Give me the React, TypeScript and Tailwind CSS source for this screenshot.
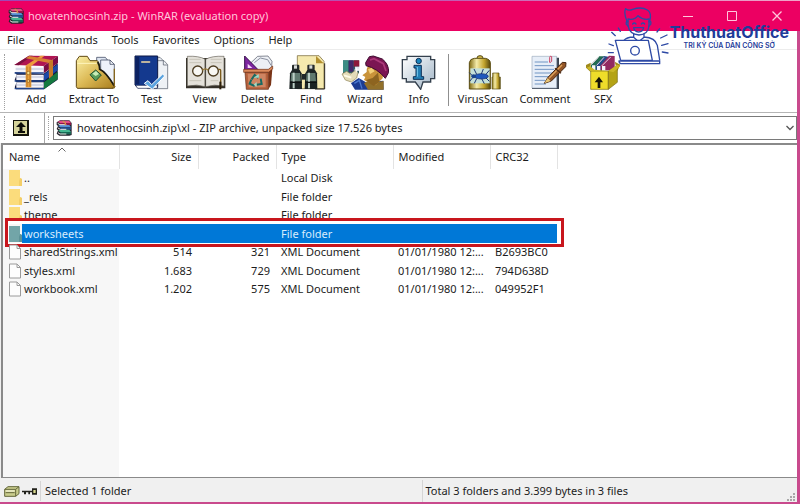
import type { ReactNode } from 'react'

const menus = ['File', 'Commands', 'Tools', 'Favorites', 'Options', 'Help']

function Icon({ box, children }: { box: string; children: ReactNode }) {
  return (
    <svg viewBox={box} className="h-9 w-12" aria-hidden="true">
      {children}
    </svg>
  )
}

const addIcon = (
  <Icon box="36 162 144 108">
    <path d="M130 222 173 190V239L132 268H48L44 262 50 247 44 240 50 224 44 216z" fill="#171a3d" />
    <path d="M43 195 87 167 174 168 131 198z" fill="#b01552" />
    <path d="M43 195 87 167 98 167 56 196z" fill="#7c0f3f" />
    <path d="M131 198 174 168V189L131 220z" fill="#7a0d45" />
    <path d="M132 223 173 193V211L132 243z" fill="#1c49a8" />
    <path d="M132 247 173 215V237L132 268z" fill="#14793f" />
    <path d="M47 200H130V217H47zM49 224H131V240H49zM49 247H131V263H49z" fill="#f4f4fa" />
    <path d="M47 207H130M49 231H131M49 255H131" stroke="#b6bcd6" strokeWidth="3" />
    <path d="M44 219H131M44 243H131M44 266H132" stroke="#20458e" strokeWidth="4" />
    <path d="M76 197 122 167 134 167 94 198z" fill="#ee9b3d" />
    <path d="M77 175 88 168 159 181 147 189z" fill="#d98234" />
    <path d="M77 197H94V262H77z" fill="#e9a33c" />
    <path d="M81 200V260M90 200V260" stroke="#a75b17" strokeWidth="2" />
    <path d="M146 187 159 178V226L147 236z" fill="#c67a28" />
    <circle cx="85" cy="219" r="5" fill="#fbe38c" stroke="#8d5417" strokeWidth="2" />
    <circle cx="85" cy="243" r="4" fill="#fbe38c" stroke="#8d5417" strokeWidth="2" />
  </Icon>
)

const extractIcon = (
  <Icon box="210 162 144 108">
    <defs>
      <linearGradient id="folder" x1="0" y1="0" x2="1" y2="1">
        <stop offset="0" stopColor="#fbf0a6" />
        <stop offset="0.5" stopColor="#dcb955" />
        <stop offset="1" stopColor="#a97d1c" />
      </linearGradient>
    </defs>
    <path d="M290 172H316L324 182V240H290z" fill="#dfe6f2" stroke="#27324b" strokeWidth="2" />
    <path d="M302 180H330L343 193V250H302z" fill="#eef2fa" stroke="#27324b" strokeWidth="2" />
    <path d="M330 180V193H343" fill="none" stroke="#27324b" strokeWidth="2" />
    <path d="M229 182 238 169H262L270 182H292C300 190 299 202 299 208 318 216 330 240 345 260L340 265H232L229 260z" fill="url(#folder)" stroke="#5f4712" strokeWidth="3" />
    <path d="M232 190H290" stroke="#fff6be" strokeWidth="3" />
    <path d="M293 186Q299 196 299 208 318 216 343 258" fill="none" stroke="#1c1a12" strokeWidth="5" />
    <path d="M343 206V263H336" fill="none" stroke="#87671f" strokeWidth="4" />
    <path d="M270 224 287 210 304 225 287 243z" fill="#5a9d5c" stroke="#244f31" strokeWidth="3" />
    <path d="M277 221 288 213 297 222 287 228z" fill="#c9ecb7" />
  </Icon>
)

const testIcon = (
  <Icon box="382 162 144 108">
    <path d="M456 172H478L488 182V255H456z" fill="#e6eaf0" stroke="#4c5361" strokeWidth="2" />
    <path d="M464 182H490L501 194V266H440V240z" fill="#eef1f5" stroke="#4c5361" strokeWidth="2" />
    <path d="M488 183V195H500" fill="none" stroke="#4c5361" strokeWidth="2" />
    <path d="M403 168H471V262H410L403 255z" fill="#14398e" stroke="#0b1744" strokeWidth="3" />
    <path d="M405 171H416V253H405z" fill="#0c2161" />
    <path d="M404 256H470V265H411z" fill="#fff" stroke="#0b1744" strokeWidth="2" />
    <rect x="421" y="184" width="28" height="4" rx="2" fill="#f3dca2" />
    <path d="M431 250 442 242 453 254 486 222 492 228 455 268z" fill="#5ba3df" stroke="#fff" strokeWidth="3" />
  </Icon>
)

const viewIcon = (
  <Icon box="541 162 144 108">
    <path d="M556 174H674V265H556z" fill="#343029" />
    <path d="M560 169Q595 167 614 178V260Q590 252 560 258zM670 169Q633 167 615 178V260Q640 252 670 258z" fill="#e4e1da" stroke="#656158" strokeWidth="2" />
    <path d="M566 178H600M566 188H602M630 178H663M630 188H663M566 242H602M630 242H653" stroke="#c8c4ba" strokeWidth="3" />
    <path d="M614 176V264" stroke="#4e4a42" strokeWidth="4" />
    <circle cx="591" cy="213" r="15" fill="#f8f7f3" stroke="#4b3b20" strokeWidth="4" />
    <circle cx="638" cy="213" r="15" fill="#f8f7f3" stroke="#4b3b20" strokeWidth="4" />
    <path d="M605 211Q614 202 623 211" fill="none" stroke="#9b7b35" strokeWidth="4" />
    <path d="M653 209Q661 206 660 214V262" fill="none" stroke="#7b5b1c" strokeWidth="4" />
    <path d="M659 245V268" stroke="#2c200c" strokeWidth="6" />
  </Icon>
)

const deleteIcon = (
  <Icon box="-19 162 144 108">
    <path d="M32 188 52 169 83 168 95 184 93 212H32z" fill="#edf0f5" stroke="#4d5260" strokeWidth="2" />
    <path d="M42 188 60 174 82 179 92 196" fill="none" stroke="#8b90a0" strokeWidth="3" />
    <path d="M13 168V212H56z" fill="#7d25a0" stroke="#38104c" strokeWidth="3" />
    <path d="M22 191V204H36z" fill="#f6d6f8" />
    <path d="M10 208H84L97 198V207L85 217H10z" fill="#dc8a5b" stroke="#6b2e14" strokeWidth="2" />
    <path d="M14 217H84V268H18z" fill="#b5613c" stroke="#602a15" strokeWidth="2" />
    <path d="M84 217 96 207 92 255 84 268z" fill="#793417" />
    <path d="M22 221H76V262H25z" fill="#cf8562" />
    <path d="M34 238 43 225 54 234M61 236 64 252 49 254M43 258 28 251 33 239" fill="none" stroke="#176a63" strokeWidth="6" />
    <path d="M40 233H56L55 222zM49 246V261L40 254z" fill="#9ddac8" />
  </Icon>
)

const findIcon = (
  <Icon box="141 162 144 108">
    <path d="M172 167H237L252 184V266H172z" fill="#f5e9ae" stroke="#6b5b28" strokeWidth="2" />
    <path d="M228 168 251 190H228z" fill="#b28f2d" />
    <path d="M254 190V267H225" fill="none" stroke="#28231a" strokeWidth="3" />
    <rect x="186" y="222" width="20" height="17" fill="#20282a" />
    {[148, 194].map((x) => (
      <g key={x}>
        <rect x={x + 8} y="194" width="22" height="20" rx="3" fill="#262b2c" />
        <rect x={x + 14} y="196" width="9" height="10" fill="#d7dbd9" />
        <path d={`M${x + 2} 220 ${x + 8} 210H${x + 31}L${x + 37} 220 ${x + 38} 267H${x}z`} fill="#1c2424" />
        <path d={`M${x + 6} 219H${x + 32}L${x + 34} 244H${x + 4}z`} fill="#60796f" />
        <path d={`M${x + 13} 218V265`} stroke="#bccfc6" strokeWidth="6" />
        <path d={`M${x + 2} 247H${x + 37}`} stroke="#0d1212" strokeWidth="4" />
      </g>
    ))}
  </Icon>
)

const wizardIcon = (
  <Icon box="303 162 144 108">
    <path d="M309 181H357V220H309z" fill="#315d68" />
    <path d="M309 181H325V217H309z" fill="#3c8c84" />
    <path d="M326 181H340V215H326z" fill="#42286b" />
    <path d="M341 181H358V200H341z" fill="#8d183b" />
    <path d="M345 200H358V212H345z" fill="#dfe4f0" />
    <path d="M306 222 320 214 332 222 347 210 354 218 350 234 334 246 316 240z" fill="#e3dcb9" stroke="#8c8052" strokeWidth="2" />
    <path d="M312 226 334 233" stroke="#fffbe8" strokeWidth="6" />
    <path d="M350 203V217M343 210H357" stroke="#fff" strokeWidth="3" />
    <path d="M333 250 356 234 378 247 430 242 431 269H345z" fill="#1c3c91" />
    <path d="M343 250 358 241 366 266" fill="none" stroke="#4a78cf" strokeWidth="4" />
    <path d="M372 250Q390 234 413 246L431 243V269H384z" fill="#92702a" />
    <path d="M383 200Q378 208 380 216L367 226 376 231 372 240 388 248 407 256 428 235 431 207 403 190z" fill="#c9933a" />
    <path d="M384 208 396 203 404 214 390 222z" fill="#f3cf76" />
    <path d="M378 240 398 234 414 218 418 246 401 258 386 248z" fill="#8d6420" />
    <path d="M377 188 388 170 400 168 427 177Q447 193 446 217L436 235Q412 205 378 197z" fill="#7b1553" stroke="#3e0b30" strokeWidth="3" />
    <path d="M390 180 402 176 430 191 438 213" fill="none" stroke="#ac397a" strokeWidth="5" />
  </Icon>
)

const infoIcon = (
  <Icon box="465 162 144 108">
    <defs>
      <linearGradient id="bubble" x1="0" y1="0" x2="1" y2="1">
        <stop offset="0" stopColor="#ffffff" />
        <stop offset="1" stopColor="#9fb3c5" />
      </linearGradient>
    </defs>
    <path d="M501 169H572V179H584V236H572V246H549L542 268 526 246H499V236H487V179H501z" fill="url(#bubble)" stroke="#34404d" strokeWidth="4" />
    <circle cx="536" cy="183" r="8" fill="#1983bb" stroke="#0d2f57" strokeWidth="3" />
    <path d="M522 196H544V230H551V238H520V230H528V204H522z" fill="#227fb6" stroke="#0d2f57" strokeWidth="3" />
    <path d="M532 201V230" stroke="#79cbee" strokeWidth="3" />
  </Icon>
)

const virusIcon = (
  <Icon box="57 162 144 108">
    <defs>
      <linearGradient id="can">
        <stop offset="0" stopColor="#806b12" />
        <stop offset="0.35" stopColor="#f5ecaa" />
        <stop offset="0.7" stopColor="#c3a52d" />
        <stop offset="1" stopColor="#55460c" />
      </linearGradient>
    </defs>
    <path d="M111 174Q111 167 120 167T129 174" fill="#d9bf4a" stroke="#554915" strokeWidth="3" />
    <path d="M88 188Q90 176 103 175H136Q150 178 151 188V267H88z" fill="url(#can)" stroke="#5c4e13" strokeWidth="3" />
    <path d="M158 219H177V231H181V267H156V231H158z" fill="url(#can)" stroke="#5c4e13" strokeWidth="2" />
    <path d="M91 205H149V250H91z" fill="#c4e0d8" />
    <path d="M98 228 88 218M110 223 102 207M124 222 130 207M137 224 148 211M98 233 89 244M110 236 103 250M125 236 133 251M137 233 148 244" stroke="#183473" strokeWidth="3" />
    <ellipse cx="124" cy="229" rx="21" ry="8" fill="#1d58bd" stroke="#122b68" strokeWidth="2" />
    <ellipse cx="101" cy="229" rx="7" ry="6" fill="#17448d" />
  </Icon>
)

const commentIcon = (
  <Icon box="243 162 144 108">
    <path d="M282 173H357V267H276z" fill="#39414f" />
    <path d="M276 169H350V264H276z" fill="#e7eef8" stroke="#9caabd" strokeWidth="2" />
    <path d="M284 186H324M284 197H342M284 208H342M284 219H339M284 230H328M284 241H315M284 252H318" stroke="#7195c3" strokeWidth="3" />
    <path d="M329 188V172Q330 166 335 170V184Q331 190 328 184" fill="none" stroke="#cc4564" strokeWidth="3" />
    <path d="M313 250 323 233 367 187 378 188 377 200 334 243z" fill="#925526" stroke="#452714" strokeWidth="3" />
    <path d="M327 235 366 195" stroke="#dfa35b" strokeWidth="4" />
    <path d="M313 250 323 234 332 243z" fill="#e8c574" />
    <path d="M345 205 363 220" stroke="#4c2a13" strokeWidth="4" />
  </Icon>
)

const sfxIcon = (
  <Icon box="417 162 144 108">
    <path d="M438 195 452 188 452 216 438 203zM524 185 541 194 532 213z" fill="#a08a1c" />
    <path d="M453 193 478 169 492 169 479 213H453z" fill="#246d51" />
    <path d="M468 196 492 168 505 170 493 213H468z" fill="#244a89" />
    <path d="M482 196 507 167 524 168V211H482z" fill="#922a61" />
    <path d="M456 196H466V217H456zM471 198H481V218H471zM486 198H496V218H486z" fill="#f7f5fa" />
    <path d="M454 194 475 172M470 196 492 172M485 198 512 171" stroke="#e9d6e5" strokeWidth="3" />
    <path d="M452 213H505V268H452z" fill="#efdd2a" stroke="#776911" strokeWidth="2" />
    <path d="M505 213 532 197V247L505 268z" fill="#b4a315" stroke="#776911" strokeWidth="2" />
    <path d="M452 213 440 203 450 199 464 209 505 213 520 217 541 198 531 194 505 213z" fill="#cbb727" />
    <path d="M473 264V247H464L477 230 489 247H481V264z" fill="#171607" />
  </Icon>
)

const tools = [
  { label: 'Add', width: 'w-[54px]', icon: addIcon },
  { label: 'Extract To', width: 'w-[62px]', icon: extractIcon },
  { label: 'Test', width: 'w-[53px]', icon: testIcon },
  { label: 'View', width: 'w-[53px]', icon: viewIcon },
  { label: 'Delete', width: 'w-[53px]', icon: deleteIcon },
  { label: 'Find', width: 'w-[54px]', icon: findIcon },
  { label: 'Wizard', width: 'w-[54px]', icon: wizardIcon },
  { label: 'Info', width: 'w-[54px]', icon: infoIcon },
]

const extraTools = [
  { label: 'VirusScan', width: 'w-[62px]', icon: virusIcon },
  { label: 'Comment', width: 'w-[62px]', icon: commentIcon },
  { label: 'SFX', width: 'w-[54px]', icon: sfxIcon },
]

const files = [
  { name: '..', type: 'Local Disk' },
  { name: '_rels', type: 'File folder' },
  { name: 'theme', type: 'File folder' },
  { name: 'worksheets', type: 'File folder', selected: true },
  { name: 'sharedStrings.xml', size: '514', packed: '321', type: 'XML Document', modified: '01/01/1980 12:...', crc: 'B2693BC0' },
  { name: 'styles.xml', size: '1.683', packed: '729', type: 'XML Document', modified: '01/01/1980 12:...', crc: '794D638D' },
  { name: 'workbook.xml', size: '1.202', packed: '575', type: 'XML Document', modified: '01/01/1980 12:...', crc: '049952F1' },
]

function ArchiveIcon() {
  return (
    <svg viewBox="0 0 48 48" className="size-4 shrink-0" aria-hidden="true">
      <path d="M2 7 12 1H40L47 9V45L40 47H10L2 41 6 31 2 27 6 18 2 14z" fill="#24232d" />
      <path d="M4 6 12 2H39L45 9H12z" fill="#e34a84" />
      <path d="M12 9H45V15H12z" fill="#8e1747" />
      <path d="M6 18 12 15H40L45 22H13z" fill="#568fd2" />
      <path d="M13 22H45V29H13z" fill="#214f93" />
      <path d="M6 32 12 29H40L45 36H13z" fill="#44b690" />
      <path d="M13 36H45V43H13z" fill="#176955" />
      <path d="M5 10 12 14H31M6 24 13 28H31M6 38 12 42H31" fill="none" stroke="#e9e6e2" strokeWidth="3" />
      <path d="M20 3 28 9V16" fill="none" stroke="#d09448" strokeWidth="4" />
    </svg>
  )
}

function FileIcon({ folder, selected }: { folder: boolean; selected?: boolean }) {
  if (folder) {
    return (
      <svg viewBox="0 0 13 16" className="h-4 w-[13px] shrink-0" aria-hidden="true">
        <path d="M0 0H11V8L13 9V16H0z" fill={selected ? '#72a5a8' : '#fbdc7c'} />
        <path d="M11 8 13 9V16H10V11z" fill={selected ? '#5d9297' : '#f3ce68'} />
      </svg>
    )
  }
  return (
    <svg viewBox="0 0 13 16" className="h-4 w-[13px] shrink-0" aria-hidden="true">
      <path d="M.5 1H8L11.500 4.500V15H.5z" fill="#fdfdfd" stroke="#9a9a9a" />
      <path d="M8 1V4.500H11.500" fill="none" stroke="#9a9a9a" />
    </svg>
  )
}

function ToolButton({ label, width, icon }: { label: string; width: string; icon: ReactNode }) {
  return (
    <button type="button" className={`flex shrink-0 flex-col items-center whitespace-nowrap ${width}`}>
      {icon}
      <span className="leading-[18px]">{label}</span>
    </button>
  )
}

function Watermark() {
  return (
    <div className="pointer-events-none absolute top-1.5 right-2 flex text-[#1f3c9a]">
      <svg viewBox="24 18 189 180" className="h-[60px] w-[63px]" fill="none" stroke="#2e4aa5" strokeWidth="4" strokeLinecap="round" strokeLinejoin="round" aria-hidden="true">
        <path d="M85 66Q73 39 80 26 89 34 101 28 128 19 145 30 160 40 151 66" />
        <path d="M87 57Q107 61 117 47 132 61 150 57V78Q147 104 120 105 91 103 87 77z" />
        <path d="M87 64Q80 62 82 73L88 79M150 64Q158 62 155 73L149 79" />
        <path d="M101 72Q106 66 111 72M127 72Q132 66 137 72M104 83H134Q131 96 119 96 106 95 104 83z" />
        <path d="M104 102V112L119 125 135 112V102M104 111Q82 112 75 121M135 111Q169 113 175 136L182 180" />
        <path d="M49 121H148L160 181H65z" fill="#fff" />
        <path d="M65 183H182V191H67Q60 190 60 183z" fill="#fff" />
        <circle cx="108" cy="152" r="13" />
        <path d="M38 97 49 107M30 132 43 137M28 158H43M58 84 64 94M174 96 182 86M185 114 204 105M188 136 207 131M190 156 207 159" />
      </svg>
      <div className="flex flex-col items-center pt-4 font-['Inter',sans-serif]">
        <span className="text-[16px] leading-5 font-bold">ThuthuatOffice</span>
        <span className="text-[7px] leading-[7px] font-semibold">TRI KỶ CỦA DÂN CÔNG SỞ</span>
      </div>
    </div>
  )
}

export default function App() {
  return (
    <div className="relative flex min-h-screen flex-col border-r-3 border-b-2 border-r-[#c94a8d] border-b-[#c94a8d] bg-[#f0f0f0] font-['Noto_Sans','Open_Sans',sans-serif] text-[11px] leading-4 text-[#1c1c1c]">
      <div className="-mr-[3px] h-px bg-linear-to-r from-[#a047b5] via-[#bd4fae] to-[#f0a5c8]" />
      <header className="-mr-[3px] flex h-[30px] items-center bg-[#ec0062] pl-2 text-[#ffc6dc]">
        <ArchiveIcon />
        <h1 className="flex-1 pl-1 whitespace-nowrap">hovatenhocsinh.zip - WinRAR (evaluation copy)</h1>
        <button type="button" aria-label="Minimize" className="flex w-11 justify-center">
          <svg viewBox="0 0 10 10" className="size-2.5" stroke="currentColor"><path d="M0 5.5H10" /></svg>
        </button>
        <button type="button" aria-label="Maximize" className="flex w-11 justify-center">
          <svg viewBox="0 0 10 10" className="size-2.5" fill="none" stroke="currentColor"><path d="M.5 .5H9.5V9.5H.5z" /></svg>
        </button>
        <button type="button" aria-label="Close" className="flex w-[46px] justify-center">
          <svg viewBox="0 0 10 10" className="size-2.5" stroke="currentColor" strokeWidth="1.3"><path d="M.5 .5 9.5 9.5M9.5 .5 .5 9.5" /></svg>
        </button>
      </header>

      <nav className="flex h-[19px] items-center gap-3.5 border-b border-[#ececec] bg-white pl-[7px]">
        {menus.map((menu) => (
          <button key={menu} type="button">{menu}</button>
        ))}
      </nav>

      <div className="flex h-[62px] items-start bg-white pt-1 pl-1">
        <div className="mr-1 h-14 border-l border-dotted border-[#a0a0a0]" />
        {tools.map((tool) => (
          <ToolButton key={tool.label} {...tool} />
        ))}
        <div className="mr-[3px] ml-0.5 h-[52px] border-l border-[#8f8f8f]" />
        {extraTools.map((tool) => (
          <ToolButton key={tool.label} {...tool} />
        ))}
      </div>

      <div className="flex h-[31px] items-center border-t border-[#b5b5b5] bg-white pl-1">
        <div className="h-6 border-l border-dotted border-[#a0a0a0]" />
        <button type="button" aria-label="Up one level" className="mx-2">
          <svg viewBox="0 0 16 16" className="size-4">
            <path d="M0 0H16V16H0z" fill="#14140c" />
            <path d="M1 1H14V14H1z" fill="#d5d39a" />
            <path d="M8 2 13 7H9.500V11H12V13H5V11H6.500V7H3z" fill="#0c0c08" />
          </svg>
        </button>
        <div className="ml-[7px] h-full border-l border-[#a8a8a8]" />
        <div className="mr-1 ml-[3px] h-6 border-l border-dotted border-[#a0a0a0]" />
        <div className="relative flex h-6 flex-1 items-center border border-[#7a7a7a] bg-white pl-0.5">
          <ArchiveIcon />
          <select aria-label="Archive path" className="h-full flex-1 appearance-none bg-transparent pl-[5px]">
            <option>hovatenhocsinh.zip\xl - ZIP archive, unpacked size 17.526 bytes</option>
          </select>
          <svg viewBox="0 0 8 6" className="pointer-events-none absolute right-0.5 h-1.5 w-2" fill="none" stroke="#555" strokeWidth="1.3" aria-hidden="true">
            <path d="M.5 1 4 4.500 7.500 1" />
          </svg>
        </div>
      </div>

      <main className="ml-px flex-1 border-t-2 border-b border-l-2 border-[#8a8a8a] bg-white bg-[linear-gradient(to_right,#f7f7f7_116px,#ffffff_116px)]">
        <table className="w-[554px] table-fixed text-left whitespace-nowrap">
          <colgroup>
            <col className="w-[116px]" />
            <col className="w-[79px]" />
            <col className="w-[78px]" />
            <col className="w-[117px]" />
            <col className="w-[97px]" />
            <col className="w-[67px]" />
          </colgroup>
          <thead className="bg-white">
            <tr className="h-6 *:border-r *:border-[#e3e3e3] *:font-normal">
              <th className="relative pl-1.5">
                Name
                <svg viewBox="0 0 8 5" className="absolute top-0.5 left-[55px] h-[5px] w-2" fill="none" stroke="#666" aria-hidden="true">
                  <path d="M.5 4.500 4 1 7.500 4.500" />
                </svg>
              </th>
              <th className="pr-1.5 text-right">Size</th>
              <th className="pr-1.5 text-right">Packed</th>
              <th className="pl-[5px]">Type</th>
              <th className="pl-[5px]">Modified</th>
              <th className="pl-[5px]">CRC32</th>
            </tr>
          </thead>
          <tbody>
            {files.map((file) => (
              <tr
                key={file.name}
                aria-selected={file.selected}
                className="relative odd:h-[18px] even:h-[19px] aria-selected:text-[#d9ecfc] aria-selected:[&>td+td]:bg-[#0078d7]"
              >
                <td>
                  <div className="flex items-center pl-1.5">
                    <FileIcon folder={!file.size} selected={file.selected} />
                    <span className={file.selected ? 'flex-1 bg-[#0078d7] pl-0.5 leading-[19px]' : 'pl-0.5 leading-[18px]'}>
                      {file.name}
                    </span>
                  </div>
                  {file.selected && (
                    <div className="absolute -top-1.5 -right-[7px] -bottom-1 left-0.5 border-3 border-[#c8161d]">
                      <div className="h-full border-t-3 border-r-3 border-b border-l border-white" />
                    </div>
                  )}
                </td>
                <td className="pr-1.5 text-right">{file.size}</td>
                <td className="pr-1.5 text-right">{file.packed}</td>
                <td className="pl-[5px]">{file.type}</td>
                <td className="pl-[5px]">{file.modified}</td>
                <td className="pl-[5px]">{file.crc}</td>
              </tr>
            ))}
          </tbody>
        </table>
      </main>

      <footer className="flex h-6 items-center pt-0.5">
        <div className="flex w-[53%] items-center pl-1">
          <svg viewBox="0 0 108 39" className="h-[13px] w-9" aria-hidden="true">
            <path d="M2 13 12 5H45V26L35 34H2z" fill="#c9cd8d" stroke="#64683b" strokeWidth="3" />
            <path d="M2 13H35L45 5M35 13V34M5 23H32" fill="none" stroke="#64683b" strokeWidth="3" />
            <path d="M5 16H32V20H5z" fill="#f3f4d5" />
            <path d="M54 17H84V10H99V29H84V22H78V28H73V22H66V28H60V22H54z" fill="#22221b" />
            <path d="M88 15H95V24H88z" fill="#d8d98e" />
          </svg>
          <div className="mr-1 h-5 border-l border-[#d5d5d5]" />
          Selected 1 folder
        </div>
        <div className="flex h-full flex-1 items-center border-l border-[#d5d5d5] pr-px pl-0.5">
          <span className="flex-1">Total 3 folders and 3.399 bytes in 3 files</span>
          <svg viewBox="0 0 9 9" className="size-[9px] self-end" fill="#a8a8a8" aria-hidden="true">
            <path d="M6 0H8V2H6zM3 3H5V5H3zM6 3H8V5H6zM0 6H2V8H0zM3 6H5V8H3zM6 6H8V8H6z" />
          </svg>
        </div>
      </footer>

      <Watermark />
    </div>
  )
}
